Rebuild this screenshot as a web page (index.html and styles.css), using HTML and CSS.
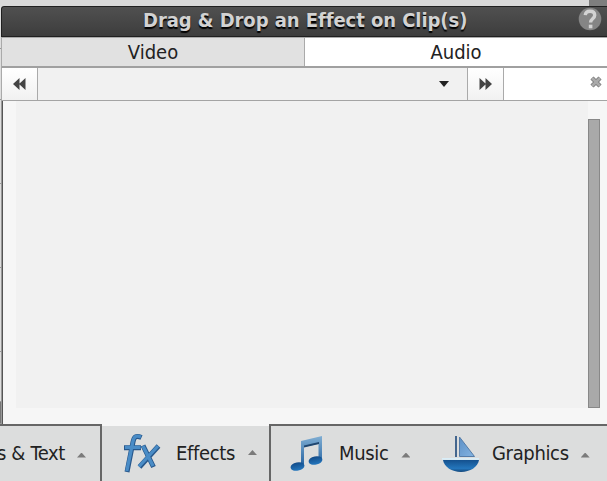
FILE: index.html
```
<!DOCTYPE html>
<html lang="en">
<head>
    <meta charset="UTF-8">
    <title>Effects</title>
    <link rel="stylesheet" href="styles.css">
</head>
<body>
    <div class="top-strip"></div>
    <div class="main">
        <div class="gutter">
            <i class="cell-first"></i><i class="cell-second"></i><i></i><i></i><i></i><i class="cell-short"></i><i class="cell-dark"></i>
        </div>
        <div class="panel">
            <div class="panel-header">
                <h1>Drag &amp; Drop an Effect on Clip(s)</h1>
                <svg class="help" viewBox="0 0 24 24">
                    <circle cx="12" cy="12" r="11.3" fill="#858585"/>
                    <path d="M7.3 8.2C7.5 5.3 9.3 4.2 12 4.2c2.7 0 4.7 1.4 4.7 4 0 3.6-4.1 3.5-4.1 7.2" fill="none" stroke="#d3d3d3" stroke-width="3.4"/>
                    <rect x="10.8" y="17.7" width="3.6" height="3.6" fill="#d3d3d3"/>
                </svg>
            </div>
            <div class="tabs">
                <div class="tab active">Video</div>
                <div class="tab">Audio</div>
            </div>
            <div class="toolbar">
                <button class="nav prev"><svg width="13" height="12" viewBox="0 0 13 12"><path d="M0 6 6.5 0v12zM6 6l6.5-6v12z"/></svg></button>
                <div class="select"><svg width="10" height="6" viewBox="0 0 10 6"><path d="M0 0h10L5 6z"/></svg></div>
                <button class="nav next"><svg width="13" height="12" viewBox="0 0 13 12"><path d="M.5 0 7 6 .5 12zM6.5 0 13 6l-6.5 6z"/></svg></button>
                <div class="search">
                    <svg width="12" height="12" viewBox="0 0 12 12"><path d="m2 2 8 8M10 2 2 10" stroke="#777" stroke-width="4.4"/><path d="m2 2 8 8M10 2 2 10" stroke="#aaa" stroke-width="2.7"/></svg>
                </div>
            </div>
            <div class="content">
                <div class="effect-list"></div>
                <div class="scroll-track"><div class="scroll-thumb"></div></div>
            </div>
        </div>
    </div>
    <div class="bottom-bar">
        <div class="item titles"><span>s &amp; Text</span><b class="arrow"></b></div>
        <div class="item effects">
            <svg width="38" height="42" viewBox="0 0 38 42">
                <g fill="none" stroke="#28588c" stroke-width="5">
                    <path d="M18.500 4.500C13 2 11 4 10 9L4 39M1 14.800h17"/>
                    <path d="M20 12.500 30.500 34M35.500 13 16.500 34"/>
                </g>
                <g fill="none" stroke="#4a8cc6" stroke-width="3.300">
                    <path d="M18 4C13 1.800 10.800 3.800 9.800 9L3.800 38M2 14.300h15.500"/>
                    <path d="M20 13 30 33M35 13 16 33.500"/>
                </g>
            </svg>
            <span>Effects</span><b class="arrow"></b>
        </div>
        <div class="item music">
            <svg width="34" height="37" viewBox="0 0 34 37">
                <defs>
                    <linearGradient id="note" x2="0" y2="1"><stop offset="0" stop-color="#80aed3"/><stop offset="1" stop-color="#205f9f"/></linearGradient>
                    <linearGradient id="head" x2="0" y2="1"><stop offset="0" stop-color="#124a87"/><stop offset="1" stop-color="#2578bf"/></linearGradient>
                </defs>
                <path d="M11 6 32 1v24h-3.500V9L14 12v20h-3z" fill="url(#note)"/>
                <path d="m14 10.500 15-3.500v2l-15 3.500z" fill="#20466f"/>
                <ellipse cx="7.500" cy="31.500" rx="7" ry="4.200" transform="rotate(-12 7.500 31.500)" fill="url(#head)"/>
                <ellipse cx="25.500" cy="25.500" rx="7" ry="4.200" transform="rotate(-12 25.500 25.500)" fill="url(#head)"/>
            </svg>
            <span>Music</span><b class="arrow"></b>
        </div>
        <div class="item graphics">
            <svg width="38" height="37" viewBox="0 0 38 37">
                <defs>
                    <linearGradient id="sail" x2="1" y2="1"><stop offset="0" stop-color="#5d90c6"/><stop offset="1" stop-color="#84b4e2"/></linearGradient>
                    <linearGradient id="hull" x2="0" y2="1"><stop offset="0" stop-color="#14508e"/><stop offset=".7" stop-color="#2476bc"/><stop offset="1" stop-color="#124579"/></linearGradient>
                </defs>
                <path d="M14 1v21" stroke="#44668e" stroke-width="2"/>
                <path d="M17.500 2v19.500h15z" fill="url(#sail)" stroke="#557ca8"/>
                <path d="M0 23h37v1.800H0z" fill="#d9edf7"/>
                <path d="M1 25h36c-1 7-9 12-18 12S2 32 1 25z" fill="url(#hull)"/>
            </svg>
            <span>Graphics</span><b class="arrow"></b>
        </div>
    </div>
</body>
</html>
```

FILE: styles.css
```
* {
    box-sizing: border-box;
}

body {
    margin: 0;
    width: 607px;
    height: 481px;
    overflow: hidden;
    display: flex;
    flex-direction: column;
    background: #f6f6f6;
    font-family: "DejaVu Sans Condensed", "DejaVu Sans", Tahoma, sans-serif;
    font-stretch: condensed;
    color: #222;
}

svg {
    display: block;
    flex: none;
}

.top-strip {
    height: 6px;
    background: linear-gradient(to right, #d9d9d9 589px, #7e7e7e 589px);
}

.main {
    display: flex;
    height: 418px;
}

.gutter {
    flex: none;
    width: 1px;
    display: flex;
    flex-direction: column;
    background: #dedede;
}

.gutter i {
    height: 84px;
    border-bottom: 1px solid #999;
}

.gutter .cell-first {
    height: 43px;
}

.gutter .cell-second {
    height: 51px;
}

.gutter .cell-short {
    height: 50px;
}

.gutter .cell-dark {
    flex: 1;
    background: #777;
}

.panel {
    width: 606px;
    display: flex;
    flex-direction: column;
}

.panel-header {
    position: relative;
    height: 31px;
    border: 1px solid #202020;
    border-right: 0;
    border-radius: 3px 0 0 0;
    background: linear-gradient(#505050, #3d3d3d);
    padding-left: 141px;
}

.panel-header h1 {
    margin: 0;
    font-size: 20px;
    line-height: 27px;
    letter-spacing: -0.06px;
    white-space: nowrap;
    color: #d2d2d2;
    text-shadow: 0 2px 1px #000;
}

.help {
    position: absolute;
    top: 0;
    right: 5px;
    width: 24px;
    height: 24px;
}

.tabs {
    display: flex;
    height: 31px;
    border: 1px solid #aaa;
    border-bottom: 2px solid #a0a0a0;
    border-right: 0;
    font-size: 20px;
    line-height: 28px;
    text-align: center;
}

.tab {
    width: 302px;
    background: #fff;
}

.tab.active {
    width: 303px;
    background: #e1e1e1;
    border-right: 1px solid #aaa;
}

.toolbar {
    display: flex;
    height: 33px;
    border-left: 1px solid #aaa;
    border-bottom: 1px solid #a4a4a4;
    background: #f1f1f1;
}

.nav {
    display: flex;
    align-items: center;
    justify-content: center;
    width: 36px;
    padding: 0;
    border: 0;
    border-right: 1px solid #aaa;
    background: linear-gradient(#fff, #f1f1f1);
    fill: #444;
}

.nav.next {
    width: 37px;
    border-left: 1px solid #aaa;
}

.select {
    flex: 1;
    display: flex;
    align-items: center;
    justify-content: flex-end;
    padding-right: 18px;
    fill: #222;
}

.search {
    width: 103px;
    display: flex;
    justify-content: flex-end;
    padding: 8px 5px 0 0;
    background: #fff;
}

.content {
    flex: 1;
    display: flex;
    border-left: 1px solid #999;
    box-shadow: inset 1px 0 #555;
    padding: 0 7px 16px 14px;
}

.effect-list {
    flex: 1;
    background: #f1f1f1;
}

.scroll-track {
    width: 12px;
    padding-top: 18px;
}

.scroll-thumb {
    height: 289px;
    border: 1px solid #888;
    background: #a9a9a9;
}

.bottom-bar {
    display: flex;
    height: 57px;
    font-size: 20px;
    letter-spacing: -0.35px;
    background: #dcdddd;
}

.item {
    display: flex;
    align-items: center;
    white-space: nowrap;
    border-top: 2px solid #666;
}

.item span {
    line-height: 24px;
    padding-bottom: 2px;
}

.arrow {
    flex: none;
    width: 9px;
    height: 5px;
    margin-top: 3px;
    background: #7b7b7b;
    clip-path: polygon(50% 0, 100% 100%, 0 100%);
}

.titles {
    width: 102px;
    justify-content: flex-end;
    padding-right: 14px;
    gap: 12px;
    border-right: 2px solid #666;
}

.effects {
    width: 167px;
    padding-left: 21px;
    border-top-color: #f6f6f6;
}

.effects span {
    margin: 0 13px 0 15px;
}

.effects .arrow {
    margin-top: -2px;
}

.music {
    width: 172px;
    padding-left: 19px;
    border-left: 2px solid #666;
}

.music span {
    margin: 0 13px 0 15px;
}

.graphics {
    flex: 1;
    padding-left: 1px;
}

.graphics span {
    margin: 0 12px 0 12px;
}
```
